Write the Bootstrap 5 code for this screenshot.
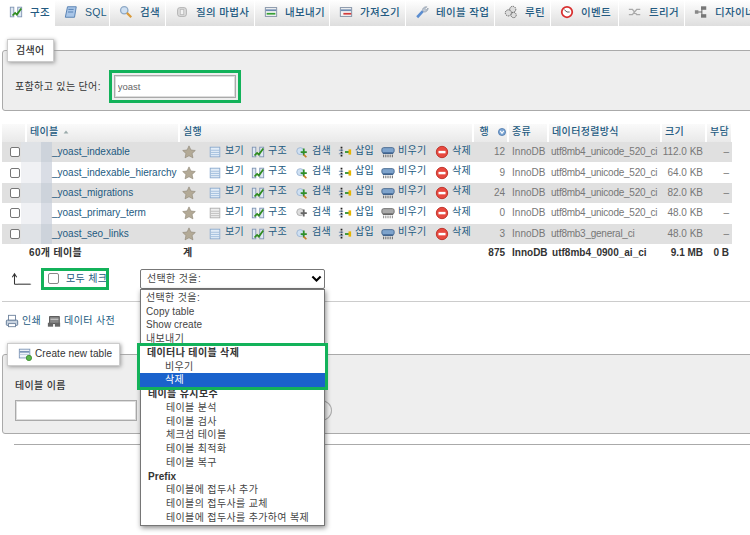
<!DOCTYPE html>
<html lang="ko"><head><meta charset="utf-8"><title>phpMyAdmin</title>
<link href="https://cdn.jsdelivr.net/npm/bootstrap@5.3.0/dist/css/bootstrap.min.css" rel="stylesheet">
<style>
html,body{height:535px;overflow:hidden}
body{font-family:"Liberation Sans","Noto Sans CJK KR",sans-serif;font-size:10px;letter-spacing:.35px;color:#333;background:#fff;line-height:14px}
.ico{width:14px;height:14px;flex:none;vertical-align:middle}
a{color:#235a81;text-decoration:none}
.pma-tabs{height:26px;overflow:hidden;flex-wrap:nowrap;background:#fff}
.pma-tabs .nav-item{flex:none}
.pma-tabs .nav-link{display:flex;align-items:center;gap:7px;height:26px;padding:0 0 2px 9px;color:#235a81;font-size:10.5px;font-weight:500;white-space:nowrap;background:linear-gradient(#fff,#dedede);border-right:1px solid #fff}
.pma-tabs .nav-link.active{background:#fff}
.t1{width:55px}.t2{width:55px}.t3{width:56px}.t4{width:89px}.t5{width:75px}.t6{width:76px}.t7{width:89px}.t8{width:56px}.t9{width:68px}.t10{width:66px}.t11{width:80px}
.pma-fs{background:#eee;border:1px solid #aaa;border-radius:3px;margin-left:2px;position:relative}
.pma-fs.one{margin-top:24px;height:61px;padding:24px 0 0 12px;margin-right:-3px}
.pma-legend{position:absolute;left:4px;top:-12px;height:23px;background:#fff;border:1px solid #ccc;box-shadow:1px 1px 4px #999;display:flex;align-items:center;gap:3px;font-weight:500;color:#333;padding:0 8px}
.pma-input{background:#fff;border:1px solid #aaa;width:122px;height:23px;font-size:9.5px;color:#666;padding:0 3px;box-shadow:inset 0 0 0 1px #ddd;outline:0}
.green-wrap{outline:3px solid #13b25a;outline-offset:2px;display:inline-flex;margin-left:13px}
.pma-tbl{margin:13px 0 0 2px;width:730px;table-layout:fixed;border-collapse:collapse;font-size:10px}
.pma-tbl td,.pma-tbl th{padding:0;white-space:nowrap;overflow:hidden;vertical-align:middle}
.pma-tbl thead th{height:18px;font-weight:500;color:#235a81;background:linear-gradient(#fafafa,#e9e9e9);border-right:2px solid #fff;padding:0 0 2px 3px}
.pma-tbl tbody tr{height:20.4px}
.pma-tbl tbody tr.odd td{background:#e0e0e0}
.pma-tbl tbody tr.even td{background:#fff}
.pma-tbl .cb{width:10px;height:10px;margin:0 0 0 8px;display:block;border:1px solid #767676;border-radius:2px;background:#fff}
.name-cell{display:flex;height:20.4px;align-items:center}
.mask{display:block;width:31px;align-self:stretch;flex:none;margin-left:-5px;background:linear-gradient(90deg,#dfe2e6 65%,#cdd3db 65%)}
.even .mask{background:linear-gradient(90deg,#f0f1f4 65%,#d9dde5 65%)}
.pma-tbl td:nth-child(2){overflow:visible}
.nm{color:#235a81;letter-spacing:0}
.act{display:flex;align-items:center;gap:3px;padding-left:3px}
.act span{margin-top:-3px}
.num{text-align:right;padding-right:3px!important;letter-spacing:0}
.gr{color:#777;letter-spacing:0}
.pma-tbl tbody td.coll{letter-spacing:-.25px;padding-left:3px}
.pma-tbl tfoot td{height:18px;font-weight:700;color:#333;letter-spacing:0}
.pma-tbl tfoot td.foot-name{padding-left:3px;letter-spacing:.35px}
.checkrow{margin-top:7px;height:20px;padding-left:11px;position:relative;display:flex;align-items:center}
.chk-box{display:flex;align-items:center;gap:7px;padding:0 0 0 4px;height:16px;margin-left:12px;outline:3px solid #13b25a;width:62px;color:#235a81;white-space:nowrap;flex:none}
.chk-box i{display:block;width:11px;height:11px;border:1px solid #888;border-radius:2px;background:#fff;flex:none}
.sel-wrap{position:absolute;left:140px;top:0;width:185px;z-index:5}
.pma-select{font-size:10px;height:20px;padding:0 6px;border:1px solid #777;border-radius:2px;color:#444;line-height:18px;letter-spacing:.35px;background-size:13px 11px;background-position:right 1px center;font-family:inherit;background-image:url("data:image/svg+xml,%3csvg xmlns='http://www.w3.org/2000/svg' viewBox='0 0 16 16'%3e%3cpath fill='none' stroke='%23000' stroke-width='3' d='m2 5 6 6 6-6'/%3e%3c/svg%3e")}
.pma-list{border:1px solid #767676;background:#fff;box-shadow:1px 2px 5px rgba(0,0,0,.45);color:#444;padding-top:1px}
.pma-list div{height:13.75px;line-height:13.75px;padding-left:5px;white-space:nowrap}
.pma-list .lat{letter-spacing:.05px}
.pma-list .opt2{padding-left:25px}
.pma-list .grp{font-weight:600;color:#333;padding-left:7px}
.pma-list .hi{background:#1a62cc;color:#fff}
.pma-list .greenbox{height:auto;padding:0;outline:3px solid #13b25a;position:relative;z-index:2;background:#fff;margin:0 -1px}
hr.pma-hr{margin:12px 0 0 2px;border:0;border-top:1px solid #ccc;opacity:1}
.links{margin:11px 0 0 5px;display:flex;gap:4px;align-items:center;height:17px}
.links a{display:flex;align-items:center;gap:3px;margin-right:2px}
.pma-fs.two{margin-top:24px;height:80px;padding:24px 0 0 12px;margin-right:-3px}
.pma-fs.two .pma-legend{padding:0 7px 0 10px;width:113px;letter-spacing:.1px;white-space:nowrap}
.pma-fs.two .lb{display:block;color:#333;margin-bottom:7px;font-weight:500}
.pma-input.wide{width:122px;height:21px}
.pma-go{width:22px;height:21px;border:1px solid #aaa;border-radius:50%;position:absolute;left:307px;top:45px;background:#eee}
.pma-end{margin:10px 0 0 14px;border:0;border-top:1px solid #aaa;opacity:1}
</style></head><body>
<svg width="0" height="0" class="d-block" aria-hidden="true"><defs>
<symbol id="i-struct" viewBox="0 0 16 16"><rect x="1.5" y="2.5" width="4" height="11" fill="#dfe8f3" stroke="#7d93b2"/><rect x="10" y="2.5" width="4.5" height="11" fill="#dfe8f3" stroke="#7d93b2"/><path d="M4 12 7 9l2 2 5-7" fill="none" stroke="#2f8c1f" stroke-width="2"/></symbol>
<symbol id="i-sql" viewBox="0 0 16 16"><path d="M4 2h10l-2 12H1.500z" fill="#a9c6e8" stroke="#4c78ad"/><path d="M5 5h6M4.500 8h6" stroke="#4c78ad"/></symbol>
<symbol id="i-mag" viewBox="0 0 16 16"><circle cx="6" cy="6" r="4.200" fill="#cfe0f2" stroke="#8ea9c6" stroke-width="1.500"/><path d="M9 9l5 5" stroke="#d99a3a" stroke-width="2.500"/></symbol>
<symbol id="i-db" viewBox="0 0 16 16"><rect x="3" y="3" width="10" height="10" rx="2.500" fill="#ddd" stroke="#aaa"/><rect x="6" y="5" width="4" height="6" fill="#f2f2f2" stroke="#bbb"/></symbol>
<symbol id="i-exp" viewBox="0 0 16 16"><rect x="1.500" y="3" width="13" height="10" fill="#f4f4f4" stroke="#7a8aa0"/><path d="M2 6h12" stroke="#6d8ab0" stroke-width="2"/><path d="M3 10h10" stroke="#35a035" stroke-width="2"/></symbol>
<symbol id="i-imp" viewBox="0 0 16 16"><rect x="1.500" y="3" width="13" height="10" fill="#f4f4f4" stroke="#7a8aa0"/><path d="M2 6h12" stroke="#6d8ab0" stroke-width="2"/><path d="M5 10h9" stroke="#d23a3a" stroke-width="2"/></symbol>
<symbol id="i-wrench" viewBox="0 0 16 16"><path d="M2.500 14 9 7" stroke="#5b8dd0" stroke-width="3"/><path d="M9 7c-1-3 1-5 4.500-5L11 4.500l1.500 1.500L15 3.500c0 3-2.500 5-5 4.500z" fill="#c4cedb" stroke="#7d8a9a" stroke-width=".7"/></symbol>
<symbol id="i-gear" viewBox="0 0 16 16"><g fill="#ddd" stroke="#555" stroke-dasharray="1.500 .8"><circle cx="10" cy="5" r="3.500"/><circle cx="5" cy="9" r="3.500"/><circle cx="11" cy="11.500" r="3"/></g></symbol>
<symbol id="i-clock" viewBox="0 0 16 16"><circle cx="8" cy="8" r="6" fill="#fff" stroke="#d82f2f" stroke-width="2"/><path d="M8 8 5 5.500M8 8h3" stroke="#444"/></symbol>
<symbol id="i-trig" viewBox="0 0 16 16"><path d="M1 5h4l5 6h4M1 11h4l5-6h4" fill="none" stroke="#aaa" stroke-width="1.600"/></symbol>
<symbol id="i-design" viewBox="0 0 16 16"><path d="M3 8h6M9 3v10" stroke="#555"/><rect x="1" y="6" width="4" height="4" fill="#888"/><rect x="8" y="1.500" width="6" height="4" fill="#777"/><rect x="8" y="10.500" width="6" height="4" fill="#777"/></symbol>
<symbol id="i-star" viewBox="0 0 16 16"><path d="M8 1l2.200 4.700 5 .6-3.700 3.400 1 5L8 12.300 3.500 14.700l1-5L.8 6.300l5-.6z" fill="#b3aa97" stroke="#8d8675" stroke-width=".7"/></symbol>
<symbol id="i-view" viewBox="0 0 16 16"><rect x="2.500" y="2.500" width="11" height="11" fill="#e3edf8" stroke="#87a7cd"/><path d="M3 6h10M3 8.500h10M3 11h10" stroke="#9dbada"/></symbol>
<symbol id="i-view0" viewBox="0 0 16 16"><rect x="2.500" y="2.500" width="11" height="11" fill="#eee" stroke="#aaa"/><path d="M3 6h10M3 8.500h10M3 11h10" stroke="#bbb"/></symbol>
<symbol id="i-srch" viewBox="0 0 16 16"><circle cx="6" cy="7" r="4" fill="#cfe0f2" stroke="#9ab4d2"/><path d="M10 4v8M6.500 8h7" stroke="#2e8f2a" stroke-width="2"/><path d="M10 11l3 3" stroke="#c97f2a" stroke-width="2"/></symbol>
<symbol id="i-srch0" viewBox="0 0 16 16"><circle cx="6" cy="7" r="4" fill="#ddd" stroke="#aaa"/><path d="M10 4v8M6.500 8h7" stroke="#666" stroke-width="2"/></symbol>
<symbol id="i-ins" viewBox="0 0 16 16"><path d="M4 2v12" stroke="#222" stroke-width="2" stroke-dasharray="2 1"/><path d="M1 6h5M1 10h5" stroke="#6d8ab0"/><path d="M8 8h5" stroke="#2e8f2a" stroke-width="2"/><rect x="12" y="5" width="3" height="6" fill="#e6b400"/></symbol>
<symbol id="i-empty" viewBox="0 0 16 16"><rect x="1" y="3" width="14" height="6" rx="2" fill="#7ea3cc" stroke="#3f628c"/><path d="M2 9.500h12" stroke="#3f628c" stroke-width="1.500"/><path d="M3 11v3M5.500 11v3M8 11v3M10.500 11v3M13 11v3" stroke="#555"/></symbol>
<symbol id="i-empty0" viewBox="0 0 16 16"><rect x="1" y="3" width="14" height="6" rx="2" fill="#aaa" stroke="#666"/><path d="M2 9.500h12" stroke="#666" stroke-width="1.500"/><path d="M3 11v3M5.500 11v3M8 11v3M10.500 11v3M13 11v3" stroke="#777"/></symbol>
<symbol id="i-del" viewBox="0 0 16 16"><circle cx="8" cy="8" r="6.500" fill="#e8493f" stroke="#b92c24"/><rect x="4" y="6.700" width="8" height="2.800" fill="#fff"/></symbol>
<symbol id="i-print" viewBox="0 0 16 16"><rect x="4" y="1.500" width="8" height="6" fill="#fff" stroke="#6a7f9a"/><rect x="1.500" y="7" width="13" height="6" rx="1" fill="#c8d3e0" stroke="#56708f"/><rect x="4" y="11" width="8" height="3.500" fill="#fff" stroke="#6a7f9a"/></symbol>
<symbol id="i-dict" viewBox="0 0 16 16"><rect x="3" y="3" width="11" height="8" fill="#888" stroke="#444"/><path d="M4 6h9" stroke="#ddd"/><rect x="1" y="10" width="6" height="4.500" fill="#666"/><rect x="9" y="10" width="6" height="4.500" fill="#666"/></symbol>
<symbol id="i-new" viewBox="0 0 16 16"><rect x="1.500" y="2.500" width="12" height="10" fill="#f2f5fa" stroke="#7a93b5"/><path d="M2 5.500h11" stroke="#7a93b5" stroke-width="2"/><path d="M2 8.500h11" stroke="#b9c8dc"/><circle cx="12.500" cy="12.500" r="3" fill="#59b84a" stroke="#3a8a2f"/></symbol>
<symbol id="i-up" viewBox="0 0 24 16"><path d="M4 14V3M1.500 6 4 2l2.500 4M4 14h18" fill="none" stroke="#333" stroke-width="1.200"/><path d="M8 14h15" stroke="#777"/></symbol>
<symbol id="i-sort" viewBox="0 0 10 10"><path d="M2 7h6L5 3z" fill="#9aa"/></symbol>
<symbol id="i-sum" viewBox="0 0 14 14"><circle cx="7" cy="7" r="5" fill="#7ea6d3" stroke="#3f6fa8"/><path d="M4.500 5.500 7 9l2.500-3.500" fill="none" stroke="#fff" stroke-width="1.500"/></symbol>
</defs></svg>

<ul class="nav pma-tabs">
<li class="nav-item t1"><a class="nav-link active" href="#"><svg class="ico"><use href="#i-struct"/></svg>구조</a></li>
<li class="nav-item t2"><a class="nav-link" href="#"><svg class="ico"><use href="#i-sql"/></svg>SQL</a></li>
<li class="nav-item t3"><a class="nav-link" href="#"><svg class="ico"><use href="#i-mag"/></svg>검색</a></li>
<li class="nav-item t4"><a class="nav-link" href="#"><svg class="ico"><use href="#i-db"/></svg>질의 마법사</a></li>
<li class="nav-item t5"><a class="nav-link" href="#"><svg class="ico"><use href="#i-exp"/></svg>내보내기</a></li>
<li class="nav-item t6"><a class="nav-link" href="#"><svg class="ico"><use href="#i-imp"/></svg>가져오기</a></li>
<li class="nav-item t7"><a class="nav-link" href="#"><svg class="ico"><use href="#i-wrench"/></svg>테이블 작업</a></li>
<li class="nav-item t8"><a class="nav-link" href="#"><svg class="ico"><use href="#i-gear"/></svg>루틴</a></li>
<li class="nav-item t9"><a class="nav-link" href="#"><svg class="ico"><use href="#i-clock"/></svg>이벤트</a></li>
<li class="nav-item t10"><a class="nav-link" href="#"><svg class="ico"><use href="#i-trig"/></svg>트리거</a></li>
<li class="nav-item t11"><a class="nav-link" href="#"><svg class="ico"><use href="#i-design"/></svg>디자이너</a></li>
</ul>

<div class="pma-fs one">
<div class="pma-legend">검색어</div>
<div class="d-flex align-items-center"><span>포함하고 있는 단어:</span><span class="green-wrap"><input class="pma-input" value="yoast"></span></div>
</div>

<table class="pma-tbl">
<colgroup><col style="width:24px"><col style="width:153px"><col style="width:26px"><col style="width:43px"><col style="width:44px"><col style="width:43px"><col style="width:43px"><col style="width:54px"><col style="width:41px"><col style="width:35px"><col style="width:40px"><col style="width:113px"><col style="width:45px"><col style="width:26px"></colgroup>
<thead><tr><th></th><th>테이블 <svg width="8" height="8"><use href="#i-sort"/></svg></th><th colspan="7">실행</th><th class="text-end">행<svg class="ms-2" width="10" height="10"><use href="#i-sum"/></svg></th><th>종류</th><th>데이터정렬방식</th><th>크기</th><th>부담</th></tr></thead>
<tbody>
<tr class="odd"><td><input type="checkbox" class="cb form-check-input"></td><td><div class="name-cell"><span class="mask"></span><a class="nm" href="#">_yoast_indexable</a></div></td><td><div class="act"><svg class="ico"><use href="#i-star"/></svg></div></td><td><div class="act"><svg class="ico"><use href="#i-view"/></svg><span><a href="#">보기</a></span></div></td><td><div class="act"><svg class="ico"><use href="#i-struct"/></svg><span><a href="#">구조</a></span></div></td><td><div class="act"><svg class="ico"><use href="#i-srch"/></svg><span><a href="#">검색</a></span></div></td><td><div class="act"><svg class="ico"><use href="#i-ins"/></svg><span><a href="#">삽입</a></span></div></td><td><div class="act"><svg class="ico"><use href="#i-empty"/></svg><span><a href="#">비우기</a></span></div></td><td><div class="act"><svg class="ico"><use href="#i-del"/></svg><span><a href="#">삭제</a></span></div></td><td class="num gr">12</td><td class="gr ps-1">InnoDB</td><td class="gr coll">utf8mb4_unicode_520_ci</td><td class="num gr">112.0 KB</td><td class="num gr">–</td></tr>
<tr class="even"><td><input type="checkbox" class="cb form-check-input"></td><td><div class="name-cell"><span class="mask"></span><a class="nm" href="#">_yoast_indexable_hierarchy</a></div></td><td><div class="act"><svg class="ico"><use href="#i-star"/></svg></div></td><td><div class="act"><svg class="ico"><use href="#i-view"/></svg><span><a href="#">보기</a></span></div></td><td><div class="act"><svg class="ico"><use href="#i-struct"/></svg><span><a href="#">구조</a></span></div></td><td><div class="act"><svg class="ico"><use href="#i-srch"/></svg><span><a href="#">검색</a></span></div></td><td><div class="act"><svg class="ico"><use href="#i-ins"/></svg><span><a href="#">삽입</a></span></div></td><td><div class="act"><svg class="ico"><use href="#i-empty"/></svg><span><a href="#">비우기</a></span></div></td><td><div class="act"><svg class="ico"><use href="#i-del"/></svg><span><a href="#">삭제</a></span></div></td><td class="num gr">9</td><td class="gr ps-1">InnoDB</td><td class="gr coll">utf8mb4_unicode_520_ci</td><td class="num gr">64.0 KB</td><td class="num gr">–</td></tr>
<tr class="odd"><td><input type="checkbox" class="cb form-check-input"></td><td><div class="name-cell"><span class="mask"></span><a class="nm" href="#">_yoast_migrations</a></div></td><td><div class="act"><svg class="ico"><use href="#i-star"/></svg></div></td><td><div class="act"><svg class="ico"><use href="#i-view"/></svg><span><a href="#">보기</a></span></div></td><td><div class="act"><svg class="ico"><use href="#i-struct"/></svg><span><a href="#">구조</a></span></div></td><td><div class="act"><svg class="ico"><use href="#i-srch"/></svg><span><a href="#">검색</a></span></div></td><td><div class="act"><svg class="ico"><use href="#i-ins"/></svg><span><a href="#">삽입</a></span></div></td><td><div class="act"><svg class="ico"><use href="#i-empty"/></svg><span><a href="#">비우기</a></span></div></td><td><div class="act"><svg class="ico"><use href="#i-del"/></svg><span><a href="#">삭제</a></span></div></td><td class="num gr">24</td><td class="gr ps-1">InnoDB</td><td class="gr coll">utf8mb4_unicode_520_ci</td><td class="num gr">82.0 KB</td><td class="num gr">–</td></tr>
<tr class="even"><td><input type="checkbox" class="cb form-check-input"></td><td><div class="name-cell"><span class="mask"></span><a class="nm" href="#">_yoast_primary_term</a></div></td><td><div class="act"><svg class="ico"><use href="#i-star"/></svg></div></td><td><div class="act"><svg class="ico"><use href="#i-view0"/></svg><span><a href="#">보기</a></span></div></td><td><div class="act"><svg class="ico"><use href="#i-struct"/></svg><span><a href="#">구조</a></span></div></td><td><div class="act"><svg class="ico"><use href="#i-srch0"/></svg><span><a href="#">검색</a></span></div></td><td><div class="act"><svg class="ico"><use href="#i-ins"/></svg><span><a href="#">삽입</a></span></div></td><td><div class="act"><svg class="ico"><use href="#i-empty0"/></svg><span><a href="#">비우기</a></span></div></td><td><div class="act"><svg class="ico"><use href="#i-del"/></svg><span><a href="#">삭제</a></span></div></td><td class="num gr">0</td><td class="gr ps-1">InnoDB</td><td class="gr coll">utf8mb4_unicode_520_ci</td><td class="num gr">48.0 KB</td><td class="num gr">–</td></tr>
<tr class="odd"><td><input type="checkbox" class="cb form-check-input"></td><td><div class="name-cell"><span class="mask"></span><a class="nm" href="#">_yoast_seo_links</a></div></td><td><div class="act"><svg class="ico"><use href="#i-star"/></svg></div></td><td><div class="act"><svg class="ico"><use href="#i-view"/></svg><span><a href="#">보기</a></span></div></td><td><div class="act"><svg class="ico"><use href="#i-struct"/></svg><span><a href="#">구조</a></span></div></td><td><div class="act"><svg class="ico"><use href="#i-srch"/></svg><span><a href="#">검색</a></span></div></td><td><div class="act"><svg class="ico"><use href="#i-ins"/></svg><span><a href="#">삽입</a></span></div></td><td><div class="act"><svg class="ico"><use href="#i-empty"/></svg><span><a href="#">비우기</a></span></div></td><td><div class="act"><svg class="ico"><use href="#i-del"/></svg><span><a href="#">삭제</a></span></div></td><td class="num gr">3</td><td class="gr ps-1">InnoDB</td><td class="gr coll">utf8mb3_general_ci</td><td class="num gr">48.0 KB</td><td class="num gr">–</td></tr>
</tbody>
<tfoot><tr><td></td><td class="foot-name">60개 테이블</td><td colspan="7" class="ps-1">계</td><td class="num">875</td><td class="ps-1">InnoDB</td><td class="ps-1">utf8mb4_0900_ai_ci</td><td class="num">9.1 MB</td><td class="num">0 B</td></tr></tfoot>
</table>

<div class="checkrow">
<svg width="21" height="14"><use href="#i-up"/></svg>
<label class="chk-box"><i></i>모두 체크</label>
<div class="sel-wrap">
<select class="form-select pma-select"><option>선택한 것을:</option></select>
<div class="pma-list">
<div>선택한 것을:</div><div class="lat">Copy table</div><div class="lat">Show create</div><div>내보내기</div>
<div class="greenbox"><div class="grp">데이터나 테이블 삭제</div><div class="opt2">비우기</div><div class="opt2 hi">삭제</div></div>
<div class="grp">테이블 유지보수</div>
<div class="opt2">테이블 분석</div><div class="opt2">테이블 검사</div><div class="opt2">체크섬 테이블</div><div class="opt2">테이블 최적화</div><div class="opt2">테이블 복구</div>
<div class="grp lat">Prefix</div>
<div class="opt2">테이블에 접두사 추가</div><div class="opt2">테이블의 접두사를 교체</div><div class="opt2">테이블에 접두사를 추가하여 복제</div>
</div></div></div>

<hr class="pma-hr">
<div class="links"><a href="#"><svg class="ico"><use href="#i-print"/></svg>인쇄</a><a href="#"><svg class="ico"><use href="#i-dict"/></svg>데이터 사전</a></div>

<div class="pma-fs two">
<div class="pma-legend"><svg class="ico"><use href="#i-new"/></svg>Create new table</div>
<label class="lb">테이블 이름</label>
<input class="pma-input wide" aria-label="테이블 이름">
<div class="pma-go"></div>
</div>
<hr class="pma-end">
</body></html>
